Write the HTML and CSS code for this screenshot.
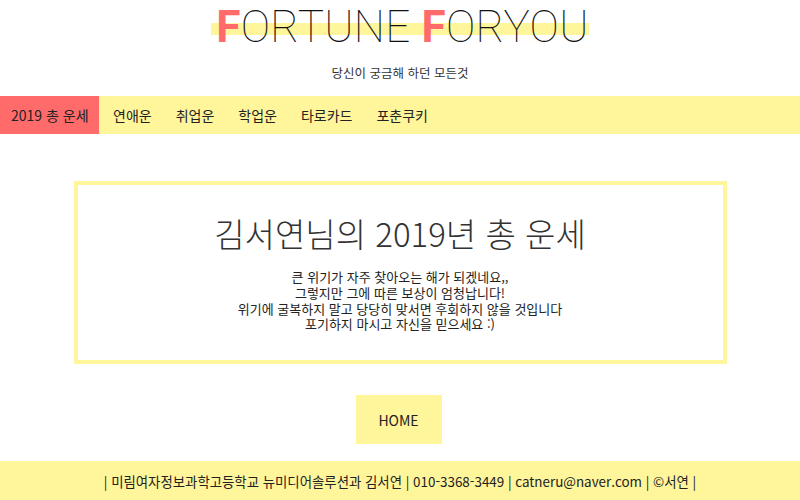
FILE: index.html
```html
<!DOCTYPE html>
<html lang="ko">
<head>
<meta charset="utf-8">
<title>Fortune For You</title>
<link rel="stylesheet" href="styles.css">
</head>
<body>
<header class="header">
  <h1 class="logo"><span class="logo-text"><span class="accent">F</span>ORTUNE <span class="accent">F</span>ORYOU</span></h1>
  <p class="tagline">당신이 궁금해 하던 모든것</p>
</header>
<nav class="nav">
  <a class="nav-item active" href="#">2019 총 운세</a>
  <a class="nav-item" href="#">연애운</a>
  <a class="nav-item" href="#">취업운</a>
  <a class="nav-item" href="#">학업운</a>
  <a class="nav-item" href="#">타로카드</a>
  <a class="nav-item" href="#">포춘쿠키</a>
</nav>
<main class="main">
  <section class="card">
    <h2 class="card-title">김서연님의 2019년 총 운세</h2>
    <p class="card-text">큰 위기가 자주 찾아오는 해가 되겠네요,,<br>그렇지만 그에 따른 보상이 엄청납니다!<br>위기에 굴복하지 말고 당당히 맞서면 후회하지 않을 것입니다<br>포기하지 마시고 자신을 믿으세요 :)</p>
  </section>
  <a class="home-btn" href="#">HOME</a>
</main>
<footer class="footer">| 미림여자정보과학고등학교 뉴미디어솔루션과 김서연 | 010-3368-3449 | catneru@naver.com | ©서연 |</footer>
</body>
</html>
```
FILE: styles.css
```css
* { box-sizing: border-box; }
html, body { margin: 0; padding: 0; }
body {
  width: 800px;
  height: 500px;
  overflow: hidden;
  font-family: "Noto Sans CJK KR", "Noto Sans", sans-serif;
  color: #222;
  background: #fff;
}
.header {
  display: flex;
  flex-direction: column;
  align-items: center;
  padding-top: 2px;
}
.logo {
  margin: 0;
  font-family: Roboto, "Noto Sans", sans-serif;
  font-weight: 100;
  font-size: 44px;
  line-height: 50px;
  color: #111;
  letter-spacing: 0.3px;
}
.logo-text {
  display: inline-block;
  padding: 0 0 0 5px;
  background: linear-gradient(to bottom, transparent 21px, #fff59a 21px, #fff59a 33px, transparent 33px);
}
.accent { color: #ff6b6b; font-weight: 700; }
.tagline {
  margin: 13px 0 0;
  font-size: 12.5px;
  line-height: 16px;
  color: #333;
}
.nav {
  display: flex;
  margin-top: 15px;
  height: 38px;
  background: #fff59a;
}
.nav-item {
  display: flex;
  align-items: center;
  padding: 0 12px;
  font-size: 14px;
  color: #222;
  text-decoration: none;
  white-space: nowrap;
}
.nav-item.active {
  background: #ff6b6b;
  width: 99px;
  padding: 0 0 0 11px;
  margin-right: 2px;
}
.main {
  display: flex;
  flex-direction: column;
  align-items: center;
  padding-top: 47px;
}
.card {
  width: 653px;
  height: 183px;
  border: 4px solid #fff59a;
  display: flex;
  flex-direction: column;
  align-items: center;
  padding-top: 26px;
}
.card-title {
  margin: 0;
  font-weight: 300;
  font-size: 33px;
  line-height: 44px;
  color: #333;
}
.card-text {
  margin: 14px 0 0;
  font-size: 13px;
  line-height: 15.8px;
  text-align: center;
  color: #222;
}
.home-btn {
  margin-top: 31px;
  margin-right: 3px;
  width: 86px;
  height: 49px;
  display: flex;
  align-items: center;
  justify-content: center;
  background: #fff59a;
  color: #222;
  font-size: 14px;
  text-decoration: none;
}
.footer {
  margin-top: 17px;
  height: 39px;
  background: #fff59a;
  display: flex;
  align-items: center;
  justify-content: center;
  font-size: 13.4px;
  color: #222;
}
```
